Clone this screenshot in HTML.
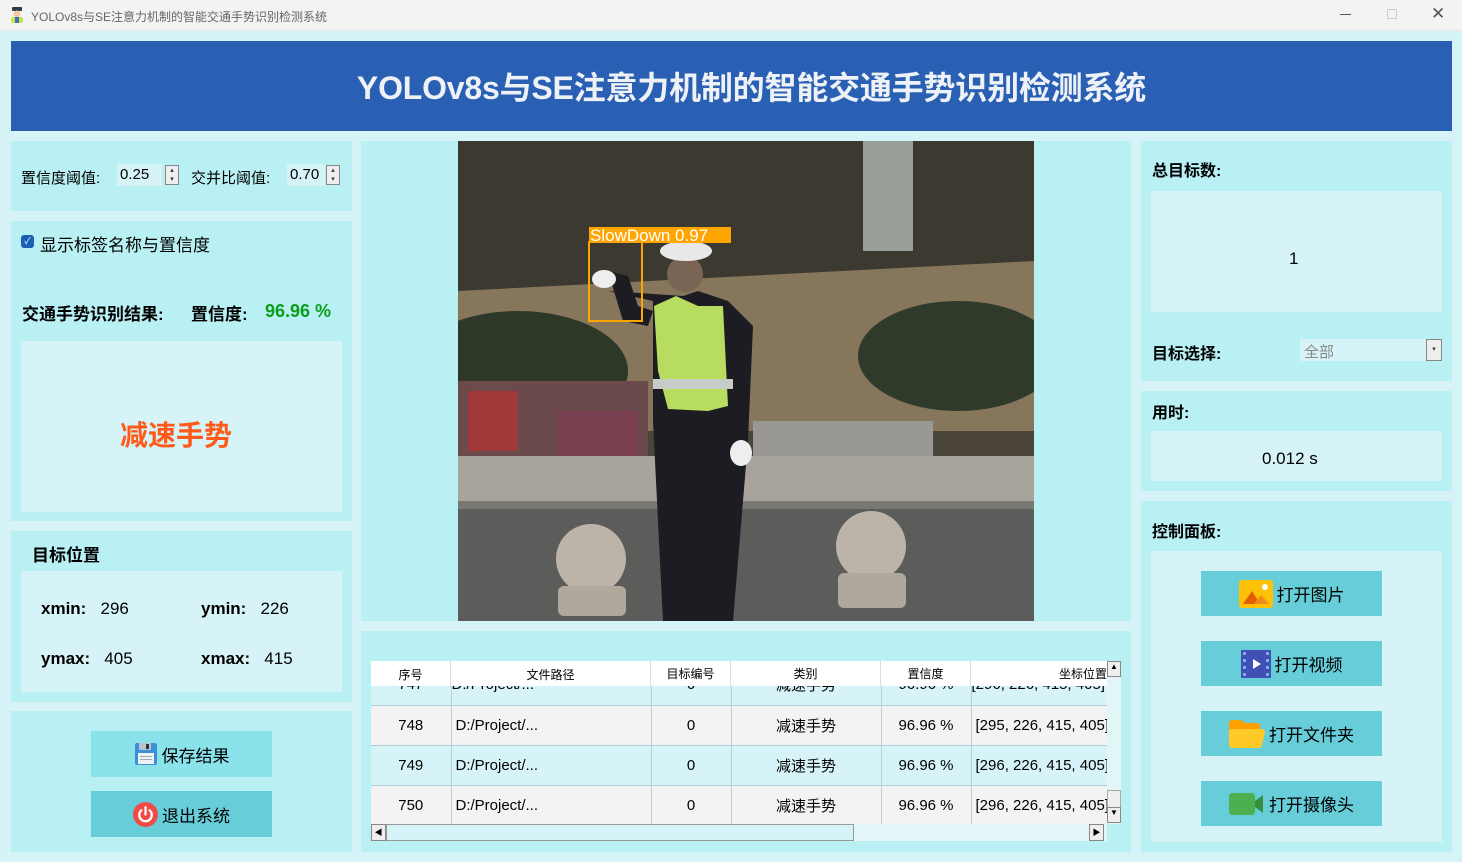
<!DOCTYPE html>
<html><head><meta charset="utf-8"><style>
*{margin:0;padding:0;box-sizing:border-box}
body{width:1462px;height:862px;overflow:hidden;background:#d6f4f7;font-family:"Liberation Sans","Noto Sans CJK SC",sans-serif;position:relative;color:#000}
.a{position:absolute}
.p{position:absolute;background:#b8f0f4}
.in{position:absolute;background:#d6f4f7}
.b{font-weight:bold}
.btn{position:absolute;background:#66cdd9;display:flex;align-items:center;justify-content:center;font-size:17px;gap:4px}
.spin{position:absolute;background:#d6f4f7;height:22px;font-size:15px;padding:2px 3px}
.arr{position:absolute;width:14px;height:20px;border:1px solid #888;background:#eee;font-size:7px;line-height:9px;text-align:center;color:#333}
table{border-collapse:collapse;font-size:15px}
</style></head><body>
<div class="a" style="left:0;top:0;width:1462px;height:31px;background:#f3f3f3;border-bottom:1px solid #e6e6e6"></div>
<svg class="a" style="left:9px;top:6px" width="16" height="18" viewBox="0 0 16 18"><rect x="3" y="1" width="10" height="4" rx="1" fill="#2d3a4a"/><circle cx="8" cy="8" r="3.5" fill="#f2c9a0"/><rect x="2" y="11" width="12" height="6" rx="2" fill="#c8e34a"/><rect x="6" y="11" width="4" height="6" fill="#3a6fb0"/></svg>
<div class="a" style="left:31px;top:8px;font-size:12px;color:#666">YOLOv8s与SE注意力机制的智能交通手势识别检测系统</div>
<div class="a" style="left:1340px;top:14px;width:11px;height:1px;background:#555"></div>
<div class="a" style="left:1387px;top:9px;width:10px;height:10px;border:1px solid #ccc"></div>
<div class="a" style="left:1431px;top:4px;font-size:17px;color:#555">✕</div>
<div class="a" style="left:11px;top:41px;width:1441px;height:90px;background:#2a60b4;color:#eef1f6;font-size:32px;font-weight:bold;text-align:center;line-height:94px;padding-left:40px;letter-spacing:-0.2px">YOLOv8s与SE注意力机制的智能交通手势识别检测系统</div>

<div class="p" style="left:11px;top:141px;width:341px;height:70px"></div>
<div class="a" style="left:21px;top:167px;font-size:15px">置信度阈值:</div>
<div class="spin" style="left:117px;top:164px;width:45px">0.25</div>
<div class="arr" style="left:165px;top:165px">▴<br>▾</div>
<div class="a" style="left:191px;top:167px;font-size:15px">交并比阈值:</div>
<div class="spin" style="left:287px;top:164px;width:38px">0.70</div>
<div class="arr" style="left:326px;top:165px">▴<br>▾</div>

<div class="p" style="left:11px;top:221px;width:341px;height:300px"></div>
<div class="a" style="left:21px;top:235px;width:13px;height:13px;background:#1a5fb4;border-radius:3px;color:#fff;font-size:9px;text-align:center;line-height:13px">✓</div>
<div class="a" style="left:40px;top:231px;font-size:17px">显示标签名称与置信度</div>
<div class="a b" style="left:22px;top:300px;font-size:17px">交通手势识别结果:</div>
<div class="a b" style="left:191px;top:300px;font-size:17px">置信度:</div>
<div class="a b" style="left:265px;top:301px;font-size:18px;color:#0a9e1a">96.96 %</div>
<div class="in" style="left:21px;top:341px;width:321px;height:171px"></div>
<div class="a b" style="left:21px;top:414px;width:310px;text-align:center;font-size:28px;color:#ff5a1a">减速手势</div>

<div class="p" style="left:11px;top:531px;width:341px;height:171px"></div>
<div class="a b" style="left:32px;top:541px;font-size:17px">目标位置</div>
<div class="in" style="left:21px;top:571px;width:321px;height:121px"></div>
<div class="a" style="left:41px;top:599px;font-size:17px"><b>xmin:</b>&nbsp;&nbsp; 296</div>
<div class="a" style="left:201px;top:599px;font-size:17px"><b>ymin:</b>&nbsp;&nbsp; 226</div>
<div class="a" style="left:41px;top:649px;font-size:17px"><b>ymax:</b>&nbsp;&nbsp; 405</div>
<div class="a" style="left:201px;top:649px;font-size:17px"><b>xmax:</b>&nbsp;&nbsp; 415</div>

<div class="p" style="left:11px;top:711px;width:341px;height:141px"></div>
<div class="btn" style="left:91px;top:731px;width:181px;height:46px;background:#8ae2eb"><svg width="24" height="24" viewBox="0 0 24 24"><rect x="1" y="1" width="22" height="22" rx="2" fill="#3d8fd8"/><rect x="5" y="1" width="12" height="7" fill="#b8c4cc"/><rect x="12" y="2" width="3" height="5" fill="#333"/><rect x="4" y="11" width="16" height="11" fill="#eef2f5"/><rect x="6" y="14" width="12" height="1" fill="#9ab"/><rect x="6" y="17" width="12" height="1" fill="#9ab"/></svg>保存结果</div>
<div class="btn" style="left:91px;top:791px;width:181px;height:46px"><svg width="25" height="25" viewBox="0 0 24 24"><circle cx="12" cy="12" r="12" fill="#f04b45"/><path d="M8 8a6 6 0 1 0 8 0" stroke="#fff" stroke-width="2.2" fill="none" stroke-linecap="round"/><path d="M12 5v7" stroke="#fff" stroke-width="2.2" stroke-linecap="round"/></svg>退出系统</div>

<div class="p" style="left:361px;top:141px;width:770px;height:480px"></div>
<svg class="a" style="left:458px;top:141px" width="576" height="480" viewBox="0 0 576 480">
<rect width="576" height="480" fill="#4a4538"/>
<rect x="0" y="0" width="576" height="170" fill="#3c3a30"/>
<rect x="405" y="0" width="50" height="110" fill="#9a9e98"/>
<path d="M0 150 L576 120 L576 290 L0 290Z" fill="#85765c"/>
<ellipse cx="60" cy="230" rx="110" ry="60" fill="#2e3828"/>
<ellipse cx="500" cy="215" rx="100" ry="55" fill="#2f3a2a"/>
<rect x="0" y="240" width="190" height="80" fill="#6a4a4a"/>
<rect x="10" y="250" width="50" height="60" fill="#a03a3a"/>
<rect x="100" y="270" width="80" height="50" fill="#7a4050"/>
<rect x="295" y="280" width="180" height="60" fill="#9a9894"/>
<rect x="0" y="315" width="576" height="50" fill="#a8a49c"/>
<rect x="0" y="360" width="576" height="10" fill="#7a7872"/>
<rect x="0" y="368" width="576" height="112" fill="#5c5c5a"/>
<circle cx="133" cy="418" r="35" fill="#bcb4a8"/><rect x="100" y="445" width="68" height="30" rx="6" fill="#b0a89c"/>
<circle cx="413" cy="405" r="35" fill="#bcb4a8"/><rect x="380" y="432" width="68" height="35" rx="6" fill="#b0a89c"/>
<path d="M150 150 L195 160 L195 280 L205 480 L275 480 L290 300 L295 185 L270 160 L240 150 L225 155Z" fill="#1c1c22"/>
<path d="M150 130 L170 135 L180 165 L195 170 L190 185 L165 180Z" fill="#1c1c22"/>
<path d="M196 165 L218 155 L240 165 L265 165 L270 265 L250 270 L210 268 L200 230Z" fill="#b8dc60"/>
<rect x="195" y="238" width="80" height="10" fill="#c8ccc8"/>
<circle cx="227" cy="133" r="18" fill="#7a6454"/>
<ellipse cx="228" cy="110" rx="26" ry="10" fill="#e8e8e8"/>
<ellipse cx="146" cy="138" rx="12" ry="9" fill="#eeeeee"/>
<ellipse cx="283" cy="312" rx="11" ry="13" fill="#eeeeee"/>
<rect x="131" y="86" width="142" height="16" fill="#ffa500"/>
<text x="132" y="100" font-family="Liberation Sans" font-size="17" fill="#fff">SlowDown  0.97</text>
<rect x="131" y="101" width="53" height="79" fill="none" stroke="#ffa500" stroke-width="2"/>
</svg>

<div class="p" style="left:361px;top:631px;width:770px;height:221px"></div>
<div class="a" style="left:371px;top:661px;width:736px;height:163px;overflow:hidden;background:#d6f4f7">
<table style="position:absolute;left:0;top:4px;width:790px">
<colgroup><col style="width:80px"><col style="width:200px"><col style="width:80px"><col style="width:150px"><col style="width:90px"><col style="width:190px"></colgroup>
<tr style="height:40px;background:#d6f4f7"><td style="text-align:center;border-right:1px solid #b8d0d4">747</td><td style="border-right:1px solid #b8d0d4">D:/Project/...</td><td style="text-align:center;border-right:1px solid #b8d0d4">0</td><td style="text-align:center;border-right:1px solid #b8d0d4">减速手势</td><td style="text-align:center;border-right:1px solid #b8d0d4">96.96 %</td><td>[296, 226, 415, 405]</td></tr>
<tr style="height:40px;background:#f3f3f3;border-top:1px solid #b0ccd0"><td style="text-align:center;border-right:1px solid #b8d0d4">748</td><td style="padding-left:4px;border-right:1px solid #b8d0d4">D:/Project/...</td><td style="text-align:center;border-right:1px solid #b8d0d4">0</td><td style="text-align:center;border-right:1px solid #b8d0d4">减速手势</td><td style="text-align:center;border-right:1px solid #b8d0d4">96.96 %</td><td style="padding-left:4px">[295, 226, 415, 405]</td></tr>
<tr style="height:40px;background:#d6f4f7;border-top:1px solid #b0ccd0"><td style="text-align:center;border-right:1px solid #b8d0d4">749</td><td style="padding-left:4px;border-right:1px solid #b8d0d4">D:/Project/...</td><td style="text-align:center;border-right:1px solid #b8d0d4">0</td><td style="text-align:center;border-right:1px solid #b8d0d4">减速手势</td><td style="text-align:center;border-right:1px solid #b8d0d4">96.96 %</td><td style="padding-left:4px">[296, 226, 415, 405]</td></tr>
<tr style="height:40px;background:#f3f3f3;border-top:1px solid #b0ccd0;border-bottom:1px solid #b0ccd0"><td style="text-align:center;border-right:1px solid #b8d0d4">750</td><td style="padding-left:4px;border-right:1px solid #b8d0d4">D:/Project/...</td><td style="text-align:center;border-right:1px solid #b8d0d4">0</td><td style="text-align:center;border-right:1px solid #b8d0d4">减速手势</td><td style="text-align:center;border-right:1px solid #b8d0d4">96.96 %</td><td style="padding-left:4px">[296, 226, 415, 405]</td></tr>
</table>
<div class="a" style="left:0;top:0;width:736px;height:25px;background:#fff;font-size:12px;display:flex">
<div style="width:80px;text-align:center;line-height:28px;border-right:1px solid #ddd">序号</div>
<div style="width:200px;text-align:center;line-height:28px;border-right:1px solid #ddd">文件路径</div>
<div style="width:80px;text-align:center;line-height:26px;border-right:1px solid #ddd">目标编号</div>
<div style="width:150px;text-align:center;line-height:26px;border-right:1px solid #ddd">类别</div>
<div style="width:90px;text-align:center;line-height:26px;border-right:1px solid #ddd">置信度</div>
<div style="width:136px;text-align:right;line-height:26px;white-space:nowrap;overflow:hidden">坐标位置</div>
</div>
</div>
<div class="a" style="left:1107px;top:661px;width:14px;height:163px;background:#e2f6f8"></div>
<div class="a" style="left:1107px;top:661px;width:14px;height:16px;background:#eee;border:1px solid #888;font-size:8px;text-align:center">▲</div>
<div class="a" style="left:1107px;top:790px;width:14px;height:18px;background:#eee;border:1px solid #aaa"></div>
<div class="a" style="left:1107px;top:807px;width:14px;height:16px;background:#eee;border:1px solid #888;font-size:8px;text-align:center">▼</div>
<div class="a" style="left:371px;top:824px;width:736px;height:17px;background:#e2f6f8"></div>
<div class="a" style="left:371px;top:824px;width:15px;height:17px;background:#eee;border:1px solid #888;font-size:8px;text-align:center;line-height:15px">◀</div>
<div class="a" style="left:386px;top:824px;width:468px;height:17px;background:#d6f4f7;border:1px solid #999"></div>
<div class="a" style="left:1089px;top:824px;width:15px;height:17px;background:#eee;border:1px solid #888;font-size:8px;text-align:center;line-height:15px">▶</div>

<div class="p" style="left:1141px;top:141px;width:311px;height:240px"></div>
<div class="a b" style="left:1152px;top:157px;font-size:16px">总目标数:</div>
<div class="in" style="left:1151px;top:191px;width:291px;height:121px"></div>
<div class="a" style="left:1289px;top:249px;font-size:17px">1</div>
<div class="a b" style="left:1152px;top:340px;font-size:16px">目标选择:</div>
<div class="a" style="left:1300px;top:339px;width:142px;height:22px;background:#d6f4f7;font-size:15px;color:#888;padding:2px 4px">全部</div>
<div class="arr" style="left:1426px;top:339px;height:22px;width:16px;line-height:20px">▾</div>

<div class="p" style="left:1141px;top:391px;width:311px;height:100px"></div>
<div class="a b" style="left:1152px;top:399px;font-size:16px">用时:</div>
<div class="in" style="left:1151px;top:431px;width:291px;height:50px"></div>
<div class="a" style="left:1262px;top:449px;font-size:17px">0.012 s</div>

<div class="p" style="left:1141px;top:501px;width:311px;height:351px"></div>
<div class="a b" style="left:1152px;top:518px;font-size:16px">控制面板:</div>
<div class="in" style="left:1151px;top:551px;width:291px;height:291px"></div>
<div class="btn" style="left:1201px;top:571px;width:181px;height:45px"><svg width="34" height="28" viewBox="0 0 34 28"><rect width="34" height="28" rx="3" fill="#ffc107"/><path d="M4 24 L13 11 L21 24Z" fill="#e65c00"/><path d="M15 24 L22 15 L30 24Z" fill="#f08c1a"/><circle cx="26" cy="7" r="3" fill="#fff"/></svg>打开图片</div>
<div class="btn" style="left:1201px;top:641px;width:181px;height:45px"><svg width="30" height="28" viewBox="0 0 30 28"><rect width="30" height="28" fill="#3f51b5"/><g fill="#7fa8e8"><rect x="2" y="2" width="3" height="3"/><rect x="2" y="9" width="3" height="3"/><rect x="2" y="16" width="3" height="3"/><rect x="2" y="23" width="3" height="3"/><rect x="25" y="2" width="3" height="3"/><rect x="25" y="9" width="3" height="3"/><rect x="25" y="16" width="3" height="3"/><rect x="25" y="23" width="3" height="3"/></g><path d="M12 9 L20 14 L12 19Z" fill="#fff"/></svg>打开视频</div>
<div class="btn" style="left:1201px;top:711px;width:181px;height:45px"><svg width="36" height="28" viewBox="0 0 36 28"><path d="M0 3a3 3 0 0 1 3-3h9l4 3h12a3 3 0 0 1 3 3v4H0Z" fill="#ffa000"/><path d="M3 9h30a3 3 0 0 1 3 3l-3 13a3 3 0 0 1-3 3H3a3 3 0 0 1-3-3V12a3 3 0 0 1 3-3Z" fill="#ffca28"/></svg>打开文件夹</div>
<div class="btn" style="left:1201px;top:781px;width:181px;height:45px"><svg width="36" height="22" viewBox="0 0 36 22"><rect width="26" height="22" rx="3" fill="#4caf50"/><path d="M26 8 L34 2 V20 L26 14Z" fill="#388e3c"/></svg>打开摄像头</div>
</body></html>
